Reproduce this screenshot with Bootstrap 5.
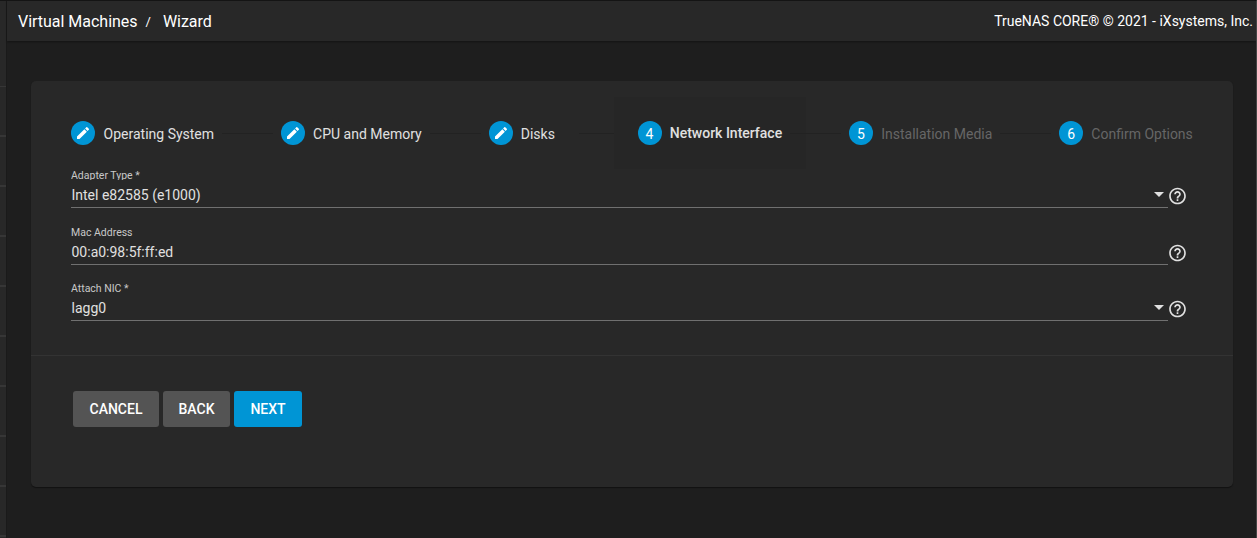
<!DOCTYPE html>
<html lang="en">
<head>
<meta charset="utf-8">
<title>Virtual Machines / Wizard</title>
<link href="https://cdn.jsdelivr.net/npm/bootstrap@5.3.0/dist/css/bootstrap.min.css" rel="stylesheet">
<style>
body{background:#1e1e1e;color:#e0e0e0;font-family:Roboto,"Liberation Sans",sans-serif;font-size:14px;line-height:20px;border-top:1px solid #141414;border-right:1px solid #454545;height:538px;overflow:hidden}
.side{width:7px;padding-top:34px;background:linear-gradient(90deg,#282828 6px,#1a1a1a 6px)}
.side i{height:50px;flex:none;width:6px;border-bottom:2px solid #363636}
.side i:first-child{height:52px;border-bottom-width:1px}
.topbar{height:40px;background:#282828;box-shadow:0 1px 2px rgba(0,0,0,.35);padding:0 3px 0 11px;color:#fff}
.crumb{font-size:16px;padding-top:2px;letter-spacing:-.02px}
.crumb .sep{font-size:13px;padding:0 12px 0 8px}
.panel{margin:40px 23px 0 24px;height:406px;background:#282828;border-radius:5px;box-shadow:0 1px 1px #111}
.steps{gap:8px;height:72px;margin:16px 40.2px 0 40.4px}
.step{height:72px;gap:8.2px;flex:none}
.step.active{background:#262626;padding:0 24px;margin:0 -24px;font-weight:500}
.dot{width:24px;height:24px;border-radius:50%;background:#0095d5;color:#fff;flex:none;font-weight:400;padding-top:1px}
.dot svg{margin-top:-1px}
.lbl{min-width:50px;padding-top:1px;white-space:nowrap}
.active .lbl{padding-top:0}
.todo .lbl{color:#666}
.rule{height:1px;background:#222}
.fields{margin:0 45.5px 0 40px}
.field-row{height:57px}
.field-row+.field-row{height:56px}
.field{height:39px;border-bottom:1px solid #707070}
.entry{padding-bottom:2px}
.field label{font-size:10.5px;line-height:13px;height:11px;overflow:hidden;color:#c8c8c8;margin-top:-3px}
.value{line-height:17px;height:16px;overflow:hidden;margin-top:7px;padding-left:.5px}
.caret{border:5px solid transparent;border-top-color:#e0e0e0;border-bottom:0;margin:12px 4px 0 0}
.help{margin-top:17px;flex:none}
.actions{border-top:1px solid #333;margin-top:17px;padding:35px 42px;gap:4px}
.actions .btn{height:36px;padding:0;border:0;border-radius:3px;background:#545454;color:#fff;font-size:14px;font-weight:500}
.actions .btn-next{background:#0095d5}
.w-cancel{width:86px}.w-back{width:67px}.w-next{width:68px}
</style>
</head>
<body class="d-flex">
<svg width="0" height="0" class="position-absolute"><defs>
<symbol id="pen" viewBox="0 0 24 24"><path fill="#fff" d="M3 17.25V21h3.75L17.81 9.94l-3.75-3.75L3 17.25zM20.71 7.04a1 1 0 0 0 0-1.41l-2.34-2.34a1 1 0 0 0-1.41 0l-1.83 1.83 3.75 3.75 1.83-1.83z"/></symbol>
<symbol id="ask" viewBox="0 0 20 20"><path transform="translate(-.5) scale(.8333)" fill="#e0e0e0" d="M11 18h2v-2h-2v2zm1-16C6.480 2 2 6.480 2 12s4.480 10 10 10 10-4.480 10-10S17.520 2 12 2zm0 18c-4.410 0-8-3.590-8-8s3.590-8 8-8 8 3.590 8 8-3.590 8-8 8zm0-14c-2.210 0-4 1.790-4 4h2c0-1.100.900-2 2-2s2 .900 2 2c0 2-3 1.750-3 5h2c0-2.250 3-2.500 3-5 0-2.210-1.790-4-4-4z"/></symbol>
</defs></svg>
<aside class="side d-flex flex-column flex-shrink-0 overflow-hidden"><i></i><i></i><i></i><i></i><i></i><i></i><i></i><i></i><i></i><i></i></aside>
<main class="flex-grow-1">
  <header class="topbar d-flex align-items-center justify-content-between">
    <div class="crumb d-flex"><span>Virtual Machines</span><span class="sep">/</span><span>Wizard</span></div>
    <span>TrueNAS CORE® © 2021 - iXsystems, Inc.</span>
  </header>
  <section class="panel overflow-hidden">
    <div class="steps d-flex align-items-center">
      <div class="step d-flex align-items-center"><span class="dot d-flex align-items-center justify-content-center"><svg width="16" height="16"><use href="#pen"/></svg></span><span class="lbl">Operating System</span></div>
      <div class="rule flex-grow-1"></div>
      <div class="step d-flex align-items-center"><span class="dot d-flex align-items-center justify-content-center"><svg width="16" height="16"><use href="#pen"/></svg></span><span class="lbl">CPU and Memory</span></div>
      <div class="rule flex-grow-1"></div>
      <div class="step d-flex align-items-center"><span class="dot d-flex align-items-center justify-content-center"><svg width="16" height="16"><use href="#pen"/></svg></span><span class="lbl">Disks</span></div>
      <div class="rule flex-grow-1"></div>
      <div class="step active d-flex align-items-center"><span class="dot d-flex align-items-center justify-content-center">4</span><span class="lbl">Network Interface</span></div>
      <div class="rule flex-grow-1"></div>
      <div class="step todo d-flex align-items-center"><span class="dot d-flex align-items-center justify-content-center">5</span><span class="lbl">Installation Media</span></div>
      <div class="rule flex-grow-1"></div>
      <div class="step todo d-flex align-items-center"><span class="dot d-flex align-items-center justify-content-center">6</span><span class="lbl">Confirm Options</span></div>
    </div>
    <div class="fields">
      <div class="field-row d-flex">
        <div class="field flex-grow-1 d-flex justify-content-between align-items-center"><div class="entry"><label class="d-block">Adapter Type *</label><div class="value">Intel e82585 (e1000)</div></div><span class="caret"></span></div>
        <svg class="help" width="20" height="20"><use href="#ask"/></svg>
      </div>
      <div class="field-row d-flex">
        <div class="field flex-grow-1 d-flex justify-content-between align-items-center"><div class="entry"><label class="d-block">Mac Address</label><div class="value">00:a0:98:5f:ff:ed</div></div></div>
        <svg class="help" width="20" height="20"><use href="#ask"/></svg>
      </div>
      <div class="field-row d-flex">
        <div class="field flex-grow-1 d-flex justify-content-between align-items-center"><div class="entry"><label class="d-block">Attach NIC *</label><div class="value">lagg0</div></div><span class="caret"></span></div>
        <svg class="help" width="20" height="20"><use href="#ask"/></svg>
      </div>
    </div>
    <div class="actions d-flex">
      <button class="btn w-cancel">CANCEL</button><button class="btn w-back">BACK</button><button class="btn btn-next w-next">NEXT</button>
    </div>
  </section>
</main>
<script src="https://cdn.jsdelivr.net/npm/bootstrap@5.3.0/dist/js/bootstrap.bundle.min.js"></script>
</body>
</html>
